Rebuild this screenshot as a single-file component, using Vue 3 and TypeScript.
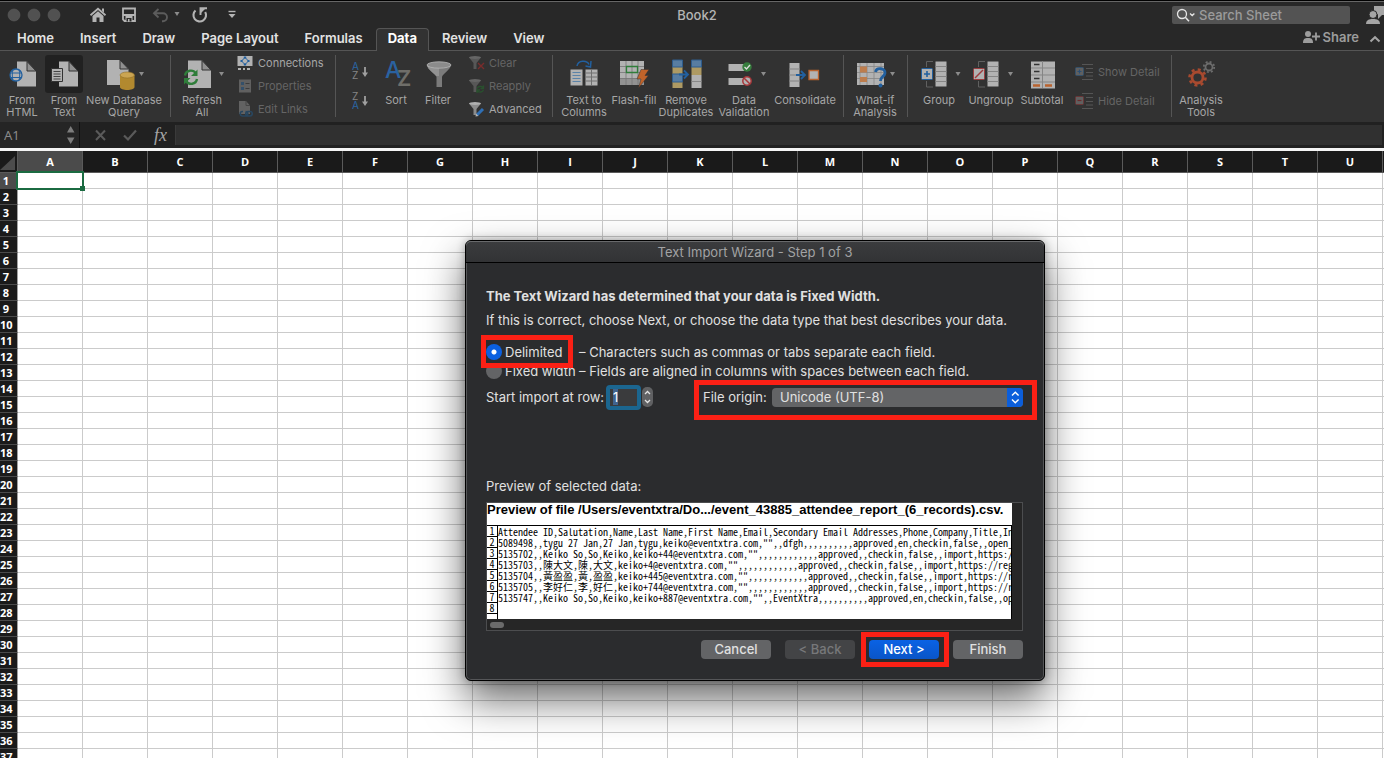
<script setup lang="ts">
import { onMounted, ref } from 'vue'

const tabs: string[] = ['Home', 'Insert', 'Draw', 'Page Layout', 'Formulas', 'Data', 'Review', 'View']
const activeTab = ref<string>('Data')

const columns: string[] = [...'ABCDEFGHIJKLMNOPQRSTU'.split(''), '']
const rowCount = 37

const dataType = ref<'delimited' | 'fixed'>('delimited')
const startRow = ref<string>('1')
const fileOrigin = ref<string>('Unicode (UTF-8)')
const startInput = ref<HTMLInputElement | null>(null)

const previewLines: string[] = [
  'Attendee ID,Salutation,Name,Last Name,First Name,Email,Secondary Email Addresses,Phone,Company,Title,In',
  '5089498,,tygu 27 Jan,27 Jan,tygu,keiko@eventxtra.com,"",,dfgh,,,,,,,,,,approved,en,checkin,false,,open_',
  '5135702,,Keiko So,So,Keiko,keiko+44@eventxtra.com,"",,,,,,,,,,,,approved,,checkin,false,,import,https:/',
  '5135703,,陳大文,陳,大文,keiko+4@eventxtra.com,"",,,,,,,,,,,,approved,,checkin,false,,import,https://reg',
  '5135704,,黃盈盈,黃,盈盈,keiko+445@eventxtra.com,"",,,,,,,,,,,,approved,,checkin,false,,import,https://r',
  '5135705,,李好仁,李,好仁,keiko+744@eventxtra.com,"",,,,,,,,,,,,approved,,checkin,false,,import,https://r',
  '5135747,,Keiko So,So,Keiko,keiko+887@eventxtra.com,"",,EventXtra,,,,,,,,,,approved,en,checkin,false,,op',
  '',
]

onMounted(() => {
  startInput.value?.focus()
  startInput.value?.select()
})
</script>

<template>
  <div class="app">
    <header class="titlebar">
      <div class="title-left">
        <svg class="lights" width="62" height="16" viewBox="0 0 62 16">
          <g fill="#515151" stroke="#5c5c5c" stroke-width="0.6">
            <circle cx="8" cy="8" r="6" /><circle cx="28" cy="8" r="6" /><circle cx="48" cy="8" r="6" />
          </g>
        </svg>
        <button class="tool home" aria-label="Home">
          <svg width="18" height="16" viewBox="0 0 18 16">
            <path d="M1.5 8.3 9 1.8l7.500 6.500" fill="none" stroke="#b4b4b4" stroke-width="1.800" />
            <path d="M13 1.500h2v4l-2-1.700z" fill="#b4b4b4" />
            <path d="M3.500 9 9 4.300 14.500 9v6h-4v-4.500h-3V15h-4z" fill="#b4b4b4" />
          </svg>
        </button>
        <button class="tool save" aria-label="Save">
          <svg width="16" height="16" viewBox="0 0 16 16">
            <path d="M2 1.500h12V14H3.500L2 12.500z" fill="none" stroke="#b4b4b4" stroke-width="1.800" />
            <path d="M2 7h12v2H2z" fill="#b4b4b4" />
            <path d="M4.500 9h7v5.500h-7z" fill="#b4b4b4" /><path d="M5.500 11h5v3.500h-2V12h-1.500v2.500H5.500z" fill="#282828" />
          </svg>
        </button>
        <button class="tool undo" aria-label="Undo">
          <svg width="28" height="16" viewBox="0 0 28 16">
            <path d="M6.500 2 2 6.300 6.500 10.500M2.300 6.300H11a4 4 0 0 1 0 8h-1" fill="none" stroke="#5c5c5c" stroke-width="1.900" />
            <path d="M22.500 5h5L25 9z" fill="#8c8c8c" />
          </svg>
        </button>
        <button class="tool redo" aria-label="Repeat">
          <svg width="18" height="18" viewBox="0 0 18 18">
            <path d="M4.500 4.500A6.300 6.300 0 1 0 14.200 6" fill="none" stroke="#b4b4b4" stroke-width="2.100" />
            <path d="M9.500 9V2.300h6.500" fill="none" stroke="#b4b4b4" stroke-width="1.900" />
            <path d="M10 3h4l-4 4z" fill="#b4b4b4" />
          </svg>
        </button>
        <button class="tool more" aria-label="Customize toolbar">
          <svg width="8" height="10" viewBox="0 0 8 10">
            <path d="M0.500 1.500h7" stroke="#b4b4b4" stroke-width="1.400" /><path d="M0.500 4h7L4 8z" fill="#b4b4b4" />
          </svg>
        </button>
      </div>
      <h1 class="title">Book2</h1>
      <div class="title-right">
        <label class="search">
          <svg width="20" height="14" viewBox="0 0 20 14">
            <circle cx="6" cy="6" r="4.500" fill="none" stroke="#e6e6e6" stroke-width="1.300" />
            <path d="m9.300 9.300 3.700 3.900" stroke="#e6e6e6" stroke-width="1.500" />
            <path d="m14 5.500 2.200 2 2.200-2" fill="none" stroke="#e6e6e6" stroke-width="1.300" />
          </svg>
          <input type="text" placeholder="Search Sheet" aria-label="Search Sheet" />
        </label>
        <svg class="person" width="18" height="20" viewBox="0 0 18 20">
          <path d="M8 1h12v9h-4l-4 4v-4.500L8 8z" fill="#a5a5a5" />
          <circle cx="7" cy="9.500" r="4" fill="#a5a5a5" stroke="#282828" />
          <path d="M0 19c0-4 3-5 7-5s7 1 7 5z" fill="#a5a5a5" />
        </svg>
      </div>
    </header>

    <nav class="tabs">
      <button v-for="t in tabs" :key="t" class="tab" :class="{ active: t === activeTab }" @click="activeTab = t">{{ t }}</button>
      <button class="share">
        <svg width="18" height="14" viewBox="0 0 18 14">
          <circle cx="5" cy="4" r="3" fill="#9c9c9c" /><path d="M0 13c0-4 1.500-5 5-5s5 1 5 5z" fill="#9c9c9c" />
          <path d="M13 2.500v8M9 6.500h8" stroke="#9c9c9c" stroke-width="1.800" />
        </svg>
        Share
      </button>
      <button class="collapse" aria-label="Collapse ribbon">
        <svg width="12" height="8" viewBox="0 0 12 8"><path d="M1.500 6.500 6 2.200l4.500 4.300" fill="none" stroke="#a5a5a5" stroke-width="2" /></svg>
      </button>
    </nav>

    <section class="ribbon">
      <div class="group import">
        <button class="big w42">
          <svg width="42" height="38" viewBox="0 0 42 38">
            <path d="M16 6.500h10L35 16v15.500H16z" fill="#b2b2b2" /><path d="M26 6.500V16h9z" fill="#909090" stroke="#333" stroke-width="1" />
            <circle cx="15" cy="20" r="6" fill="#b2b2b2" stroke="#22609f" stroke-width="1.300" />
            <path d="M9 18h12M9.500 22.500h11M12 14.500c-1 4-1 7 0 11M18 14.500c1 4 1 7 0 11" fill="none" stroke="#22609f" />
          </svg>
          <span>From<br />HTML</span>
        </button>
        <button class="big w42">
          <svg width="42" height="38" viewBox="0 0 42 38">
            <rect x="2" width="38" height="38" rx="3" fill="#212121" />
            <path d="M16 6.500h10L35 16v15.500H16z" fill="#b2b2b2" /><path d="M26 6.500V16h9z" fill="#909090" stroke="#333" stroke-width="1" />
            <path d="M8.500 13.500h11v13h-11z" fill="#b2b2b2" stroke="#333" />
            <path d="M10.500 16.500h7m-7 2.500h7m-7 2.500h7m-7 2.500h7" stroke="#444" />
          </svg>
          <span>From<br />Text</span>
        </button>
        <button class="big w78">
          <svg width="78" height="38" viewBox="0 0 78 38">
            <path d="M22 5h13l8.500 9v16H22z" fill="#b2b2b2" /><path d="M35 5v9h8.500z" fill="#909090" stroke="#333" />
            <path d="M35 20v12c0 4 14.500 4 14.500 0V20z" fill="#b2892f" /><ellipse cx="42.200" cy="20" rx="7.200" ry="3" fill="#cba552" stroke="#92702a" stroke-width=".6" />
            <path d="M54 17h5l-2.500 4z" fill="#8c8c8c" />
          </svg>
          <span>New Database<br />Query</span>
        </button>
      </div>

      <div class="group refresh">
        <button class="big w50">
          <svg width="50" height="38" viewBox="0 0 50 38">
            <path d="M11 5.500h14l9 9.500v18H11z" fill="#b2b2b2" /><path d="M25 5.500V15h9z" fill="#909090" stroke="#333" />
            <path d="M8 20.500c1-5.500 8-6.500 11-2M20 24c-1 5.500-8 6.500-11 2" fill="none" stroke="#2f7d3a" stroke-width="2.400" />
            <path d="M20.500 14.500v6.500H14zM7 29.500V23h6.500z" fill="#2f7d3a" />
            <path d="M42 17h5l-2.500 4z" fill="#8c8c8c" />
          </svg>
          <span>Refresh<br />All</span>
        </button>
        <div class="list">
          <button class="item">
            <svg width="16" height="16" viewBox="0 0 16 16">
              <path d="M.5 1h15v10H.5z" fill="#b2b2b2" /><path d="M1 13h3v2H1zm5 0h2v2H6zm4 0h3v2h-3z" fill="#b2b2b2" />
              <path d="M8 2.500 11.500 6 8 9.500 4.500 6z" fill="#b2b2b2" stroke="#22609f" /><path d="M6.800 1.500h2.400v2H6.800zM6.800 8.500h2.400v2H6.800zM3.500 5h2v2h-2zM10.500 5h2v2h-2z" fill="#22609f" />
            </svg>Connections
          </button>
          <button class="item off" disabled>
            <svg width="16" height="16" viewBox="0 0 16 16">
              <path d="M2 1.500h12v13H2z" fill="#606060" /><path d="M4 4h3v3H4zM4 9h3v3H4z" fill="#34506a" /><path d="M8.500 5.500h4m-4 5h4" stroke="#3b3b3b" />
            </svg>Properties
          </button>
          <button class="item off" disabled>
            <svg width="16" height="16" viewBox="0 0 16 16">
              <path d="M2 0h7l4 4.500V13H2z" fill="#626262" /><path d="M9 0v4.500h4" fill="none" stroke="#444" />
              <path d="M6 10.500h-.5a2.200 2.200 0 0 0 0 4.500h3a2.200 2.200 0 0 0 0-4.500M11 15a2.200 2.200 0 0 1 0-4.500h2a2.200 2.200 0 0 1 0 4.500z" fill="none" stroke="#28465f" stroke-width="1.600" />
            </svg>Edit Links
          </button>
        </div>
      </div>

      <div class="group sorting">
        <div class="pair sorts">
          <button class="mini" aria-label="Sort ascending">
            <svg width="20" height="24" viewBox="0 -2 20 24">
              <text x="1" y="8" font-size="10" fill="#2a66a5">A</text><text x="1" y="17" font-size="10" fill="#858585">Z</text>
              <path d="M14 5v7" stroke="#a0a0a0" stroke-width="1.800" /><path d="M11 10.500h6L14 15z" fill="#a0a0a0" />
            </svg>
          </button>
          <button class="mini" aria-label="Sort descending">
            <svg width="20" height="24" viewBox="0 -2 20 24">
              <text x="1" y="9" font-size="10" fill="#858585">Z</text><text x="1" y="18" font-size="10" fill="#2a66a5">A</text>
              <path d="M14 5v7" stroke="#a0a0a0" stroke-width="1.800" /><path d="M11 10.500h6L14 15z" fill="#a0a0a0" />
            </svg>
          </button>
        </div>
        <button class="big w42">
          <svg width="42" height="38" viewBox="0 0 42 38">
            <text x="10" y="23" font-size="23" font-weight="500" fill="#2a62a0">A</text>
            <text x="22" y="31" font-size="22" font-weight="600" fill="#6f6e69">Z</text>
          </svg>
          <span>Sort</span>
        </button>
        <button class="big w42">
          <svg width="42" height="38" viewBox="0 0 42 38">
            <path d="M10 10c0 4 9 9 9.500 12v10h5.500V22c.5-3 9-8 9-12z" fill="#7b7b7b" /><path d="M10 10c0 4 8 9 9 11h3V12z" fill="#929292" />
            <ellipse cx="22" cy="10" rx="12" ry="3.200" fill="#8b8b8b" stroke="#b5b5b5" stroke-width=".8" />
          </svg>
          <span>Filter</span>
        </button>
        <div class="list tight">
          <button class="item off" disabled>
            <svg width="16" height="16" viewBox="0 0 16 16">
              <path d="M0 2.500h12L7.500 8v6h-3V8z" fill="#575757" /><ellipse cx="6" cy="2.500" rx="6" ry="1.500" fill="#666" /><path d="m9 8 6 6m0-6-6 6" stroke="#7a2c2c" stroke-width="1.400" />
            </svg>Clear
          </button>
          <button class="item off" disabled>
            <svg width="16" height="16" viewBox="0 0 16 16">
              <path d="M0 2.500h12L7.500 8v6h-3V8z" fill="#575757" /><ellipse cx="6" cy="2.500" rx="6" ry="1.500" fill="#666" /><path d="M8 10.500a3.500 3 0 0 1 6-1M14.500 12a3.500 3 0 0 1-6 1M14.500 7.500v3h-3M8 15v-3h3" fill="none" stroke="#29512e" stroke-width="1.300" />
            </svg>Reapply
          </button>
          <button class="item">
            <svg width="16" height="16" viewBox="0 0 16 16">
              <path d="M0 2.500h12L7.500 8v6h-3V8z" fill="#8c8c8c" /><ellipse cx="6" cy="2.500" rx="6" ry="1.500" fill="#b0b0b0" /><path d="m8 14 6-6" stroke="#2f6fb5" stroke-width="3" /><path d="M6.500 15.500 7 12.500l2.500 2.500z" fill="#b5b5b5" />
            </svg>Advanced
          </button>
        </div>
      </div>

      <div class="group tools">
        <button class="big w50">
          <svg width="50" height="38" viewBox="0 0 50 38">
            <path d="M11.500 14.500h12v16h-12zM26.500 14.500h12v16h-12z" fill="#b2b2b2" />
            <path d="M13.500 17.500h8m-8 3h8m-8 3h8m-8 3h8" stroke="#5b83a8" /><path d="M26 18h13M26 22h13M26 26h13M32.500 14v17" stroke="#707070" />
            <path d="M18 11c1-6 10-6 12-1.500" fill="none" stroke="#22609f" stroke-width="1.500" /><path d="m32 6-.5 6-5-1" fill="none" stroke="#22609f" stroke-width="1.500" />
          </svg>
          <span>Text to<br />Columns</span>
        </button>
        <button class="big w50">
          <svg width="50" height="38" viewBox="0 0 50 38">
            <path d="M11 6h24v24H11z" fill="#b2b2b2" /><path d="M11 23h24v7H11z" fill="#929292" />
            <path d="M11 11.500h24M11 17.500h24M11 23.500h24M17 6v24m6-24v24m6-24v24" stroke="#767676" stroke-width=".8" />
            <path d="M17.500 11.500h11v6h-11z" fill="none" stroke="#2f7d3a" stroke-width="1.300" />
            <path d="M32 14.500h8l-4 6h3.500L29.500 33l2.500-9h-4z" fill="#c0632a" stroke="#333" stroke-width=".5" />
          </svg>
          <span>Flash-fill</span>
        </button>
        <button class="big w54">
          <svg width="54" height="38" viewBox="0 0 54 38">
            <path d="M13.500 5h10v7h-10zM32.500 5h10v7h-10zM13.500 19h10v8h-10z" fill="#587da1" />
            <path d="M13.500 12h10v7h-10zM13.500 27h10v6h-10zM32.500 12h10v8h-10z" fill="#ae9a63" /><path d="M32.500 20h10v13h-10z" fill="#b2b2b2" />
            <path d="M13.500 5h10v7h-10zM32.500 5h10v7h-10zM13.500 19h10v8h-10z" fill="none" stroke="#2e5c8c" /><path d="M32.500 26.500h10" stroke="#888" />
            <path d="M20 19.500h9m-4-4 4 4-4 4" fill="none" stroke="#22609f" stroke-width="1.800" />
          </svg>
          <span>Remove<br />Duplicates</span>
        </button>
        <button class="big w62">
          <svg width="62" height="38" viewBox="0 0 62 38">
            <path d="M15.500 9h18v7h-18zM15.500 23h18v7h-18z" fill="#b2b2b2" />
            <circle cx="34" cy="12" r="4.700" fill="#367d3d" /><path d="m31.500 12 2 2 3.500-4" fill="none" stroke="#ddd" stroke-width="1.300" />
            <circle cx="34" cy="26" r="4.200" fill="#b2b2b2" stroke="#a8373a" stroke-width="1.500" /><path d="m31 23 6 6" stroke="#a8373a" stroke-width="1.500" />
            <path d="M48 17h5l-2.500 4z" fill="#8c8c8c" />
          </svg>
          <span>Data<br />Validation</span>
        </button>
        <button class="big w60">
          <svg width="60" height="38" viewBox="0 0 60 38">
            <path d="M14.500 8h10v24h-10z" fill="#b2b2b2" /><path d="M14 14h11m-11 6h11m-11 6h11" stroke="#828282" />
            <path d="M21 20h9m-4-4 4 4-4 4" fill="none" stroke="#22609f" stroke-width="1.800" />
            <path d="M34 15.500h9.500v9H34z" fill="#b2b2b2" stroke="#b9632f" stroke-width="1.300" />
          </svg>
          <span>Consolidate</span>
        </button>
      </div>

      <div class="group whatif">
        <button class="big w50">
          <svg width="50" height="38" viewBox="0 0 50 38">
            <path d="M7 8h27v22H7z" fill="#b2b2b2" /><path d="M7 11.500h27M7 17.500h27M7 23.500h27M10 8v22m7-22v22m7-22v22m7-22v22" stroke="#858585" stroke-width=".8" />
            <path d="M10 11.500h7v6h-7zM10 22h7v5h-7z" fill="#bd7d4d" />
            <path d="M25.500 17c1-5 10-4 9.500 1-.5 4-4.500 3.500-4.500 8" fill="none" stroke="#22609f" stroke-width="2.800" /><circle cx="30.500" cy="30.500" r="2" fill="#22609f" />
            <path d="M40 17h5l-2.500 4z" fill="#8c8c8c" />
          </svg>
          <span>What-if<br />Analysis</span>
        </button>
      </div>

      <div class="group outline">
        <button class="big w46">
          <svg width="46" height="38" viewBox="0 0 46 38">
            <path d="M17 6.500h-6.500V12M17 32h-6.500v-6" fill="none" stroke="#606060" />
            <path d="M19.500 6.500h11v25h-11z" fill="#b2b2b2" /><path d="M19.500 11.500h11m-11 5h11m-11 5h11m-11 5h11" stroke="#858585" />
            <rect x="5.500" y="13.500" width="11" height="11" rx="1" fill="#b2b2b2" stroke="#22609f" /><path d="M11 16v6m-3-3h6" stroke="#22609f" stroke-width="1.600" />
            <path d="M39.500 17h5L42 21z" fill="#8c8c8c" />
          </svg>
          <span>Group</span>
        </button>
        <button class="big w58">
          <svg width="58" height="38" viewBox="0 0 58 38">
            <path d="M23 6.500h-6.500V12M23 32h-6.500v-6" fill="none" stroke="#606060" />
            <path d="M25.500 6.500h11v25h-11z" fill="#b2b2b2" /><path d="M25.500 11.500h11m-11 5h11m-11 5h11m-11 5h11" stroke="#858585" />
            <rect x="11.500" y="13.500" width="11" height="11" rx="1" fill="#b2b2b2" stroke="#9d3b3d" /><path d="m13 23 8-8" stroke="#9d3b3d" stroke-width="1.500" />
            <path d="M46 17h5l-2.500 4z" fill="#8c8c8c" />
          </svg>
          <span>Ungroup</span>
        </button>
        <button class="big w44">
          <svg width="44" height="38" viewBox="0 0 44 38">
            <path d="M11 6.500h24v27H11z" fill="#b2b2b2" /><path d="M22.500 6v27M11 13h24M11 20h24M11 27h24" stroke="#858585" />
            <path d="M14 9.500h5.500M14 16.500h5.500M14 23.500h5.500" stroke="#333" stroke-width="1.600" /><path d="M13 30.500h7m5 0h7" stroke="#b9632f" stroke-width="2.400" />
          </svg>
          <span>Subtotal</span>
        </button>
        <div class="pair details">
          <button class="item off" disabled>
            <svg width="18" height="18" viewBox="0 0 18 18">
              <path d="M7 1.500h11M11 5.500h7M11 9.500h7M11 13h7M7 16.500h11" stroke="#555" /><rect x=".5" y="4.500" width="8" height="8" rx="1" fill="#606060" stroke="#34506a" /><path d="M4.500 6.500v4m-2-2h4" stroke="#2a4f75" stroke-width="1.200" />
            </svg>Show Detail
          </button>
          <button class="item off" disabled>
            <svg width="18" height="18" viewBox="0 0 18 18">
              <path d="M7 1.500h11M11 5.500h7M11 9.500h7M11 13h7M7 16.500h11" stroke="#555" /><rect x=".5" y="4.500" width="8" height="8" rx="1" fill="#606060" stroke="#6a3536" /><path d="M2.500 8.500h4" stroke="#6a2b2c" stroke-width="1.200" />
            </svg>Hide Detail
          </button>
        </div>
      </div>

      <div class="group last">
        <button class="big w46">
          <svg width="46" height="38" viewBox="0 0 46 38">
            <circle cx="19.500" cy="22.500" r="5.500" fill="none" stroke="#a84a2f" stroke-width="2.800" />
            <circle cx="19.500" cy="22.500" r="8" fill="none" stroke="#a84a2f" stroke-width="2.600" stroke-dasharray="3 3.283" />
            <circle cx="31" cy="12" r="3.500" fill="none" stroke="#6c6c6c" stroke-width="1.800" />
            <circle cx="31" cy="12" r="5.200" fill="none" stroke="#6c6c6c" stroke-width="1.800" stroke-dasharray="2 2.084" />
          </svg>
          <span>Analysis<br />Tools</span>
        </button>
      </div>
    </section>

    <section class="formula">
      <div class="namebox">
        <input type="text" value="A1" aria-label="Name box" />
        <svg width="8" height="20" viewBox="0 0 8 20"><path d="M0 7.500h7.500L3.700 1zM0 12.500h7.500L3.700 19z" fill="#7d7d7d" /></svg>
      </div>
      <svg class="marks" width="42" height="14" viewBox="0 0 42 14">
        <path d="m1 2.500 9 9.500m0-9.500L1 12" stroke="#5a5a5a" stroke-width="2" fill="none" />
        <path d="m29 7.500 4 4 8-9" stroke="#5a5a5a" stroke-width="2.200" fill="none" />
      </svg>
      <span class="fx">fx</span>
      <input class="bar" type="text" aria-label="Formula" />
    </section>

    <main class="sheet">
      <table class="grid">
        <thead>
          <tr>
            <th class="corner"><svg width="16" height="18" viewBox="0 0 16 18"><path d="M15 3v14H0z" fill="#4c4c4c" /></svg></th>
            <th v-for="c in columns" :key="c" :class="{ picked: c === 'A' }">{{ c }}</th>
          </tr>
        </thead>
        <tbody>
          <tr v-for="r in rowCount" :key="r">
            <th :class="{ picked: r === 1 }">{{ r }}</th>
            <td v-for="c in columns" :key="c"><div v-if="r === 1 && c === 'A'" class="cursor"></div></td>
          </tr>
        </tbody>
      </table>
    </main>

    <div class="dialog" role="dialog" aria-labelledby="wizard-title">
      <h2 id="wizard-title" class="dialog-title">Text Import Wizard - Step 1 of 3</h2>
      <div class="dialog-body">
        <p class="lead">The Text Wizard has determined that your data is Fixed Width.</p>
        <p class="hint">If this is correct, choose Next, or choose the data type that best describes your data.</p>
        <div class="choices">
          <label class="choice">
            <input v-model="dataType" type="radio" name="type" value="delimited" />
            <span class="name">Delimited</span><span>– Characters such as commas or tabs separate each field.</span>
          </label>
          <label class="choice">
            <input v-model="dataType" type="radio" name="type" value="fixed" />
            <span class="name">Fixed width</span><span>– Fields are aligned in columns with spaces between each field.</span>
          </label>
        </div>
        <div class="options">
          <label class="start" for="start-row">Start import at row:</label>
          <input id="start-row" ref="startInput" v-model="startRow" class="start-input" type="text" />
          <button class="stepper" aria-label="Change start row">
            <svg width="11" height="20" viewBox="0 0 11 20"><path d="m3 7 2.500-2.500L8 7M3 13l2.500 2.500L8 13" fill="none" stroke="#e4e4e4" stroke-width="1.300" /></svg>
          </button>
          <label class="origin-label" for="origin">File origin:</label>
          <div class="select">
            <select id="origin" v-model="fileOrigin"><option>Unicode (UTF-8)</option></select>
            <svg width="16" height="19" viewBox="0 0 16 19"><path d="m5 7.500 3.300-3.300 3.300 3.300M5 11.500l3.300 3.300 3.300-3.300" fill="none" stroke="#fff" stroke-width="1.400" /></svg>
          </div>
        </div>
        <p class="preview-label">Preview of selected data:</p>
        <div class="preview">
          <div class="paper">
            <p class="file">Preview of file /Users/eventxtra/Do.../event_43885_attendee_report_(6_records).csv.</p>
            <table class="lines">
              <tbody>
                <tr v-for="(line, i) in previewLines" :key="i"><th>{{ i + 1 }}</th><td>{{ line }}</td></tr>
                <tr><th></th><td></td></tr>
              </tbody>
            </table>
          </div>
          <div class="thumb"></div>
        </div>
        <div class="actions">
          <button class="push">Cancel</button>
          <button class="push" disabled>&lt; Back</button>
          <button class="push primary">Next &gt;</button>
          <button class="push">Finish</button>
        </div>
      </div>
      <div class="mark mark-type"></div>
      <div class="mark mark-origin"></div>
      <div class="mark mark-next"></div>
    </div>
  </div>
</template>

<style>
html,
body {
  margin: 0;
  background: #fff;
  overflow: hidden;
}
</style>

<style scoped>
* {
  box-sizing: border-box;
}
.app {
  position: relative;
  display: flex;
  flex-direction: column;
  height: 100vh;
  overflow: hidden;
  font-family: Inter, "Liberation Sans", sans-serif;
  font-size: 13px;
  color: #e0e0e0;
}
button,
input,
select {
  font: inherit;
  color: inherit;
  margin: 0;
  padding: 0;
  border: 0;
  background: none;
  outline: none;
}
svg {
  display: block;
  flex: none;
}
h1,
h2,
p {
  margin: 0;
  font-weight: 400;
}

.titlebar {
  display: flex;
  align-items: center;
  height: 28px;
  flex: none;
  background: #282828;
  border-top: 1px solid #000;
  box-shadow: inset 0 1px #666;
}
.title-left,
.title-right {
  display: flex;
  align-items: center;
  flex: 1;
}
.title-left {
  padding-left: 6px;
}
.home {
  margin-left: 21px;
}
.save {
  margin-left: 14px;
}
.undo {
  margin-left: 15px;
}
.redo {
  margin-left: 11px;
}
.more {
  margin-left: 19px;
}
.title {
  padding-left: 4px;
  font-size: 13px;
  font-weight: 500;
  color: #b4b4b4;
}
.title-right {
  justify-content: flex-end;
}
.search {
  display: flex;
  align-items: center;
  gap: 3px;
  width: 178px;
  height: 18px;
  padding-left: 4px;
  border-radius: 2px;
  background: #535353;
}
.search input {
  width: 130px;
  font-weight: 500;
}
.search input::placeholder {
  color: #9b9b9b;
  opacity: 1;
}
.person {
  margin-left: 16px;
}

.tabs {
  display: flex;
  align-items: stretch;
  height: 23px;
  flex: none;
  padding-left: 4px;
  background: #282828;
  box-shadow: inset 0 -1px #555;
}
.tab {
  padding: 0 12px 5px;
  border: 1px solid transparent;
  border-bottom: 0;
  font-weight: 600;
  line-height: 16px;
  color: #e2e2e2;
}
.tab.active {
  padding: 0 11px 5px;
  background: #323232;
  border-color: #555;
  border-radius: 4px 4px 0 0;
  color: #fff;
  font-weight: 700;
}
.share {
  display: flex;
  align-items: center;
  gap: 2px;
  height: 17px;
  margin-left: auto;
  font-weight: 600;
  color: #9c9c9c;
}
.collapse {
  padding: 0 3px 2px 10px;
}

.ribbon {
  display: flex;
  height: 71px;
  flex: none;
  background: #323232;
  font-size: 11px;
}
.group {
  display: flex;
  position: relative;
  padding: 4px 6px 0;
}
.group:not(.last)::after {
  content: "";
  position: absolute;
  right: 0;
  top: 4px;
  bottom: 5px;
  width: 1px;
  background: #555;
}
.import {
  padding: 4px 8px 0 1px;
  width: 171px;
}
.refresh {
  width: 165px;
}
.sorting {
  width: 217px;
}
.tools {
  width: 291px;
}
.whatif {
  width: 64px;
}
.outline {
  width: 264px;
  padding-left: 8px;
}
.big {
  display: flex;
  flex-direction: column;
  flex: none;
  line-height: 12px;
  color: #a6a6a6;
  text-align: center;
  white-space: nowrap;
  align-items: center;
}
.big span {
  padding-top: 1px;
}
.w42 {
  width: 42px;
}
.w44 {
  width: 44px;
}
.w46 {
  width: 46px;
}
.w50 {
  width: 50px;
}
.w54 {
  width: 54px;
}
.w58 {
  width: 58px;
}
.w60 {
  width: 60px;
}
.w62 {
  width: 62px;
}
.w78 {
  width: 78px;
}
.list {
  display: flex;
  flex-direction: column;
  height: 69px;
  margin: -4px 0 0 10px;
}
.item {
  display: flex;
  flex: 1;
  align-items: center;
  gap: 5px;
  color: #a6a6a6;
  white-space: nowrap;
}
.list.tight .item {
  gap: 4px;
}
.item.off {
  color: #656565;
}
.pair {
  display: flex;
  flex-direction: column;
  height: 59px;
  margin-top: 2px;
}
.sorts {
  flex: none;
  width: 33px;
}
.mini {
  display: flex;
  flex: 1;
  align-items: center;
  padding-left: 9px;
}
.details {
  margin-left: 11px;
}

.formula {
  display: flex;
  align-items: center;
  height: 29px;
  flex: none;
  background: #212121;
  border-bottom: 3px solid #f4f4f4;
  font-family: "Noto Sans", sans-serif;
}
.namebox {
  display: flex;
  align-items: center;
  width: 80px;
  height: 26px;
  padding: 0 4px;
  background: #252525;
  border-right: 1px solid #111;
}
.namebox input {
  width: 63px;
  height: 20px;
  color: #8a8a8a;
}
.marks {
  margin-left: 15px;
}
.fx {
  width: 38px;
  padding-left: 17px;
  font: italic 18px/20px "Liberation Serif", serif;
  color: #a5a5a5;
}
.bar {
  flex: 1;
  height: 20px;
  margin-right: 2px;
  background: #303030;
  border-left: 1px solid #3a3a3a;
}

.sheet {
  flex: 1;
  min-height: 0;
  overflow: hidden;
  background: #fff;
}
.grid {
  width: 1448px;
  table-layout: fixed;
  border-spacing: 0;
  font-family: "Open Sans", "Noto Sans", sans-serif;
  font-size: 11px;
}
.grid th {
  height: 16px;
  padding: 0;
  background: #1a1a1a;
  color: #fff;
  font-weight: 700;
  line-height: 15px;
}
.grid thead th {
  width: 65px;
  height: 22px;
  border-right: 1px solid #5a5a5a;
  border-bottom: 1px solid #5a5a5a;
}
.grid thead th.corner {
  width: 18px;
}
.grid tbody th {
  border-bottom: 1px solid #4a4a4a;
  border-right: 1px solid #a0a0a0;
  padding-right: 5px;
}
.grid th.picked {
  background: #4b4b4b;
}
.grid td {
  position: relative;
  padding: 0;
  border-right: 1px solid #cbcbcb;
  border-bottom: 1px solid #cbcbcb;
}
.cursor {
  position: absolute;
  z-index: 1;
  inset: -2px;
  border: 2px solid #1b6b41;
}
.cursor::after {
  content: "";
  position: absolute;
  right: -3px;
  bottom: -3px;
  width: 5px;
  height: 5px;
  background: #1b6b41;
}

.dialog {
  position: absolute;
  z-index: 2;
  left: 465px;
  top: 240px;
  width: 580px;
  border: 1px solid #000;
  border-radius: 6px;
  background: #2b2c2e;
  box-shadow: inset 0 0 0 1px #555658, 0 18px 40px rgba(0, 0, 0, 0.6), 0 0 8px rgba(0, 0, 0, 0.3);
}
.dialog-title {
  height: 22px;
  border-bottom: 1px solid #000;
  border-radius: 5px 5px 0 0;
  background: linear-gradient(#3b3c3e, #323335);
  box-shadow: inset 0 1px #68696b;
  font-size: 13px;
  line-height: 23px;
  text-align: center;
  color: #a2a3a4;
}
.dialog-body {
  padding: 25px 21px 21px 20px;
  line-height: 16px;
  white-space: nowrap;
}
.lead {
  font-weight: 700;
}
.hint {
  margin-top: 8px;
}
.choices {
  display: flex;
  flex-direction: column;
  gap: 3px;
  margin-top: 16px;
}
.choice {
  display: flex;
  align-items: center;
  height: 16px;
}
.choice input {
  appearance: none;
  width: 16px;
  height: 16px;
  border-radius: 50%;
  background: #636466;
}
.choice input:checked {
  background: radial-gradient(circle, #fff 0 2px, #0b60e0 3px);
}
.name {
  width: 74px;
  margin-left: 3px;
}
.options {
  display: flex;
  align-items: center;
  height: 26px;
  margin-top: 5px;
}
.start {
  width: 120px;
}
.start-input {
  width: 35px;
  height: 25px;
  padding-left: 3px;
  border: 4px solid #1b6690;
  border-radius: 4px;
  background: #3a3b3d;
  line-height: 15px;
}
.start-input::selection {
  background: #40638e;
  color: #fff;
}
.stepper {
  margin-left: 1px;
  border-radius: 5px;
  background: #606163;
}
.origin-label {
  width: 69px;
  margin-left: 50px;
}
.select {
  display: flex;
  flex: 1;
  height: 19px;
  border-radius: 4px;
  background: #636466;
  overflow: hidden;
}
.select select {
  flex: 1;
  appearance: none;
  padding-left: 8px;
}
.select svg {
  background: #0b5edb;
}
.preview-label {
  margin-top: 68px;
}
.preview {
  height: 129px;
  margin-top: 8px;
  padding-right: 10px;
  border: 1px solid #4c4d4f;
  background: #262626;
}
.paper {
  height: 116px;
  overflow: hidden;
  background: #fff;
  color: #000;
}
.file {
  height: 22px;
  font-family: "Liberation Sans", sans-serif;
  font-weight: 700;
  line-height: 14px;
}
.lines {
  width: 100%;
  table-layout: fixed;
  border-spacing: 0;
  border-top: 1px solid #000;
  border-right: 1px solid #000;
  font-family: "Noto Sans CJK TC", "Liberation Mono", monospace;
  font-feature-settings: "hwid";
  font-size: 10px;
  line-height: 11px;
}
.lines th {
  width: 11px;
  height: 11px;
  padding: 0;
  border-right: 1px solid #000;
  border-bottom: 1px solid #000;
  font-weight: 400;
  line-height: 10px;
}
.lines td {
  height: 11px;
  padding: 0;
  white-space: pre;
}
.thumb {
  width: 14px;
  height: 6px;
  margin: 3px;
  border-radius: 3px;
  background: #6b6b6b;
}
.actions {
  display: flex;
  justify-content: flex-end;
  gap: 14px;
  margin-top: 9px;
}
.push {
  width: 70px;
  height: 19px;
  padding-bottom: 1px;
  border-radius: 4px;
  background: #636466;
  font-weight: 500;
}
.push:disabled {
  background: #434446;
  color: #77787a;
}
.push.primary {
  background: linear-gradient(#0a62e4, #0a55c8);
  color: #fff;
}
.mark {
  position: absolute;
  border: 5px solid #fb2015;
  pointer-events: none;
}
.mark-type {
  left: 15px;
  top: 94px;
  width: 92px;
  height: 33px;
}
.mark-origin {
  left: 228px;
  top: 139px;
  width: 343px;
  height: 40px;
}
.mark-next {
  left: 395px;
  top: 391px;
  width: 88px;
  height: 35px;
}
</style>
